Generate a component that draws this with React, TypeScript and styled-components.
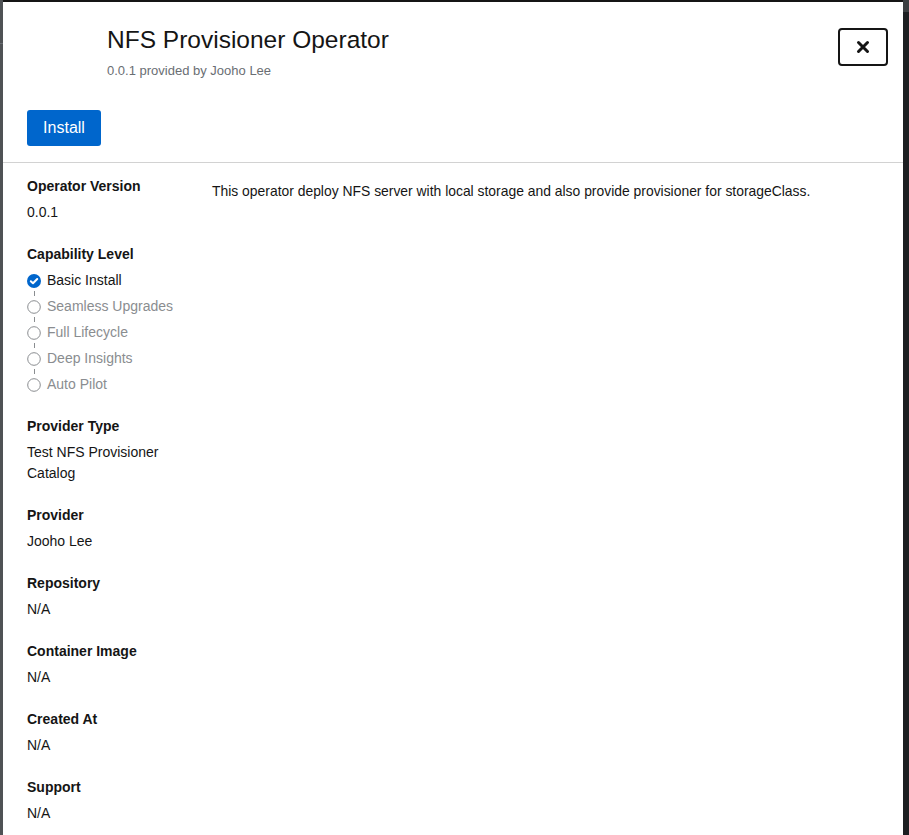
import React from 'react';
import styled, { createGlobalStyle } from 'styled-components';

const GlobalStyle = createGlobalStyle`
    html, body {
        margin: 0;
        padding: 0;
        height: 100%;
        overflow: hidden;
        background: #151515;
        font-family: "Liberation Sans", Arial, sans-serif;
        color: #151515;
    }
`;

const Page = styled.div`
    display: flex;
    height: 100vh;
`;

const Backdrop = styled.div`
    width: 3px;
    flex-shrink: 0;
    background: #4f5255;
    display: flex;
    flex-direction: column;
    padding-top: 43px;
`;

const BackdropRule = styled.div`
    height: 1px;
    background: #6a6e73;
`;

const Modal = styled.div`
    flex: 1;
    display: flex;
    flex-direction: column;
    background: #fff;
    border-top: 2px solid #151515;
    min-width: 0;
`;

const Scrollbar = styled.div`
    width: 6px;
    flex-shrink: 0;
    background: #1d1f22;
    border-top: 12px solid #3c3f42;
`;

const Header = styled.div`
    padding: 23px 15px 16px 24px;
    border-bottom: 1px solid #d2d2d2;
`;

const HeaderTop = styled.div`
    display: flex;
    align-items: flex-start;
`;

const Logo = styled.div`
    width: 64px;
    height: 64px;
    margin-right: 16px;
    flex-shrink: 0;
`;

const TitleBlock = styled.div`
    flex: 1;
`;

const Title = styled.h1`
    margin: 0;
    font-size: 24.5px;
    font-weight: 400;
    line-height: 30px;
    color: #151515;
`;

const Subtitle = styled.div`
    margin-top: 7px;
    font-size: 13px;
    line-height: 18px;
    color: #6a6e73;
`;

const CloseButton = styled.button`
    width: 50px;
    height: 38px;
    margin-top: 3px;
    border: 2px solid #151515;
    border-radius: 4px;
    background: #fff;
    display: flex;
    align-items: center;
    justify-content: center;
    padding: 0;
    cursor: pointer;
`;

const InstallButton = styled.button`
    margin-top: 21px;
    width: 74px;
    height: 36px;
    border: none;
    border-radius: 3px;
    background: #0066cc;
    color: #fff;
    font-family: inherit;
    font-size: 16px;
    padding: 0;
    cursor: pointer;
`;

const Body = styled.div`
    display: grid;
    grid-template-columns: 165px 1fr;
    column-gap: 20px;
    padding: 13px 24px 0 24px;
`;

const Props = styled.dl`
    margin: 0;
`;

const Section = styled.div`
    margin-bottom: 21px;
`;

const Term = styled.dt`
    font-size: 14px;
    font-weight: 700;
    line-height: 21px;
    margin-bottom: 5px;
`;

const Value = styled.dd`
    margin: 0;
    font-size: 14px;
    line-height: 21px;
`;

const Levels = styled.ul`
    list-style: none;
    margin: 0;
    padding: 0;
`;

const Level = styled.li<{ $active?: boolean; $first?: boolean }>`
    display: flex;
    align-items: center;
    gap: 6px;
    height: 21px;
    margin-top: ${p => (p.$first ? 0 : 5)}px;
    font-size: 14px;
    color: ${p => (p.$active ? '#151515' : '#8a8d90')};
    position: relative;

    &::before {
        content: '';
        display: ${p => (p.$first ? 'none' : 'block')};
        position: absolute;
        left: 6.5px;
        top: -5px;
        width: 1px;
        height: 5px;
        background: #8a8d90;
    }
`;

const Description = styled.div`
    font-size: 13.9px;
    line-height: 21px;
    padding-top: 5px;
`;

const CheckIcon = () => (
    <svg width="14" height="14" viewBox="0 0 14 14">
        <circle cx="7" cy="7" r="7" fill="#0066cc" />
        <path d="M3.8 7.2 L6 9.3 L10.2 5" stroke="#fff" strokeWidth="2" fill="none" strokeLinecap="round" strokeLinejoin="round" />
    </svg>
);

const EmptyIcon = () => (
    <svg width="14" height="14" viewBox="0 0 14 14">
        <circle cx="7" cy="7" r="6.3" fill="none" stroke="#8a8d90" strokeWidth="1" />
    </svg>
);

const levels = ['Basic Install', 'Seamless Upgrades', 'Full Lifecycle', 'Deep Insights', 'Auto Pilot'];

const details: { term: string; value: string }[] = [
    { term: 'Provider Type', value: 'Test NFS Provisioner Catalog' },
    { term: 'Provider', value: 'Jooho Lee' },
    { term: 'Repository', value: 'N/A' },
    { term: 'Container Image', value: 'N/A' },
    { term: 'Created At', value: 'N/A' },
    { term: 'Support', value: 'N/A' },
];

export default function App() {
    return (
        <Page>
            <GlobalStyle />
            <Backdrop>
                <BackdropRule />
            </Backdrop>
            <Modal>
                <Header>
                    <HeaderTop>
                        <Logo />
                        <TitleBlock>
                            <Title>NFS Provisioner Operator</Title>
                            <Subtitle>0.0.1 provided by Jooho Lee</Subtitle>
                        </TitleBlock>
                        <CloseButton aria-label="Close">
                            <svg width="14" height="14" viewBox="0 0 14 14">
                                <path d="M2.5 2.5 L11.5 11.5 M11.5 2.5 L2.5 11.5" stroke="#151515" strokeWidth="3" strokeLinecap="round" />
                            </svg>
                        </CloseButton>
                    </HeaderTop>
                    <InstallButton>Install</InstallButton>
                </Header>
                <Body>
                    <Props>
                        <Section>
                            <Term>Operator Version</Term>
                            <Value>0.0.1</Value>
                        </Section>
                        <Section>
                            <Term>Capability Level</Term>
                            <Value>
                                <Levels>
                                    {levels.map((l, i) => (
                                        <Level key={l} $active={i === 0} $first={i === 0}>
                                            {i === 0 ? <CheckIcon /> : <EmptyIcon />}
                                            {l}
                                        </Level>
                                    ))}
                                </Levels>
                            </Value>
                        </Section>
                        {details.map(d => (
                            <Section key={d.term}>
                                <Term>{d.term}</Term>
                                <Value>{d.value}</Value>
                            </Section>
                        ))}
                    </Props>
                    <Description>
                        This operator deploy NFS server with local storage and also provide provisioner for storageClass.
                    </Description>
                </Body>
            </Modal>
            <Scrollbar />
        </Page>
    );
}
